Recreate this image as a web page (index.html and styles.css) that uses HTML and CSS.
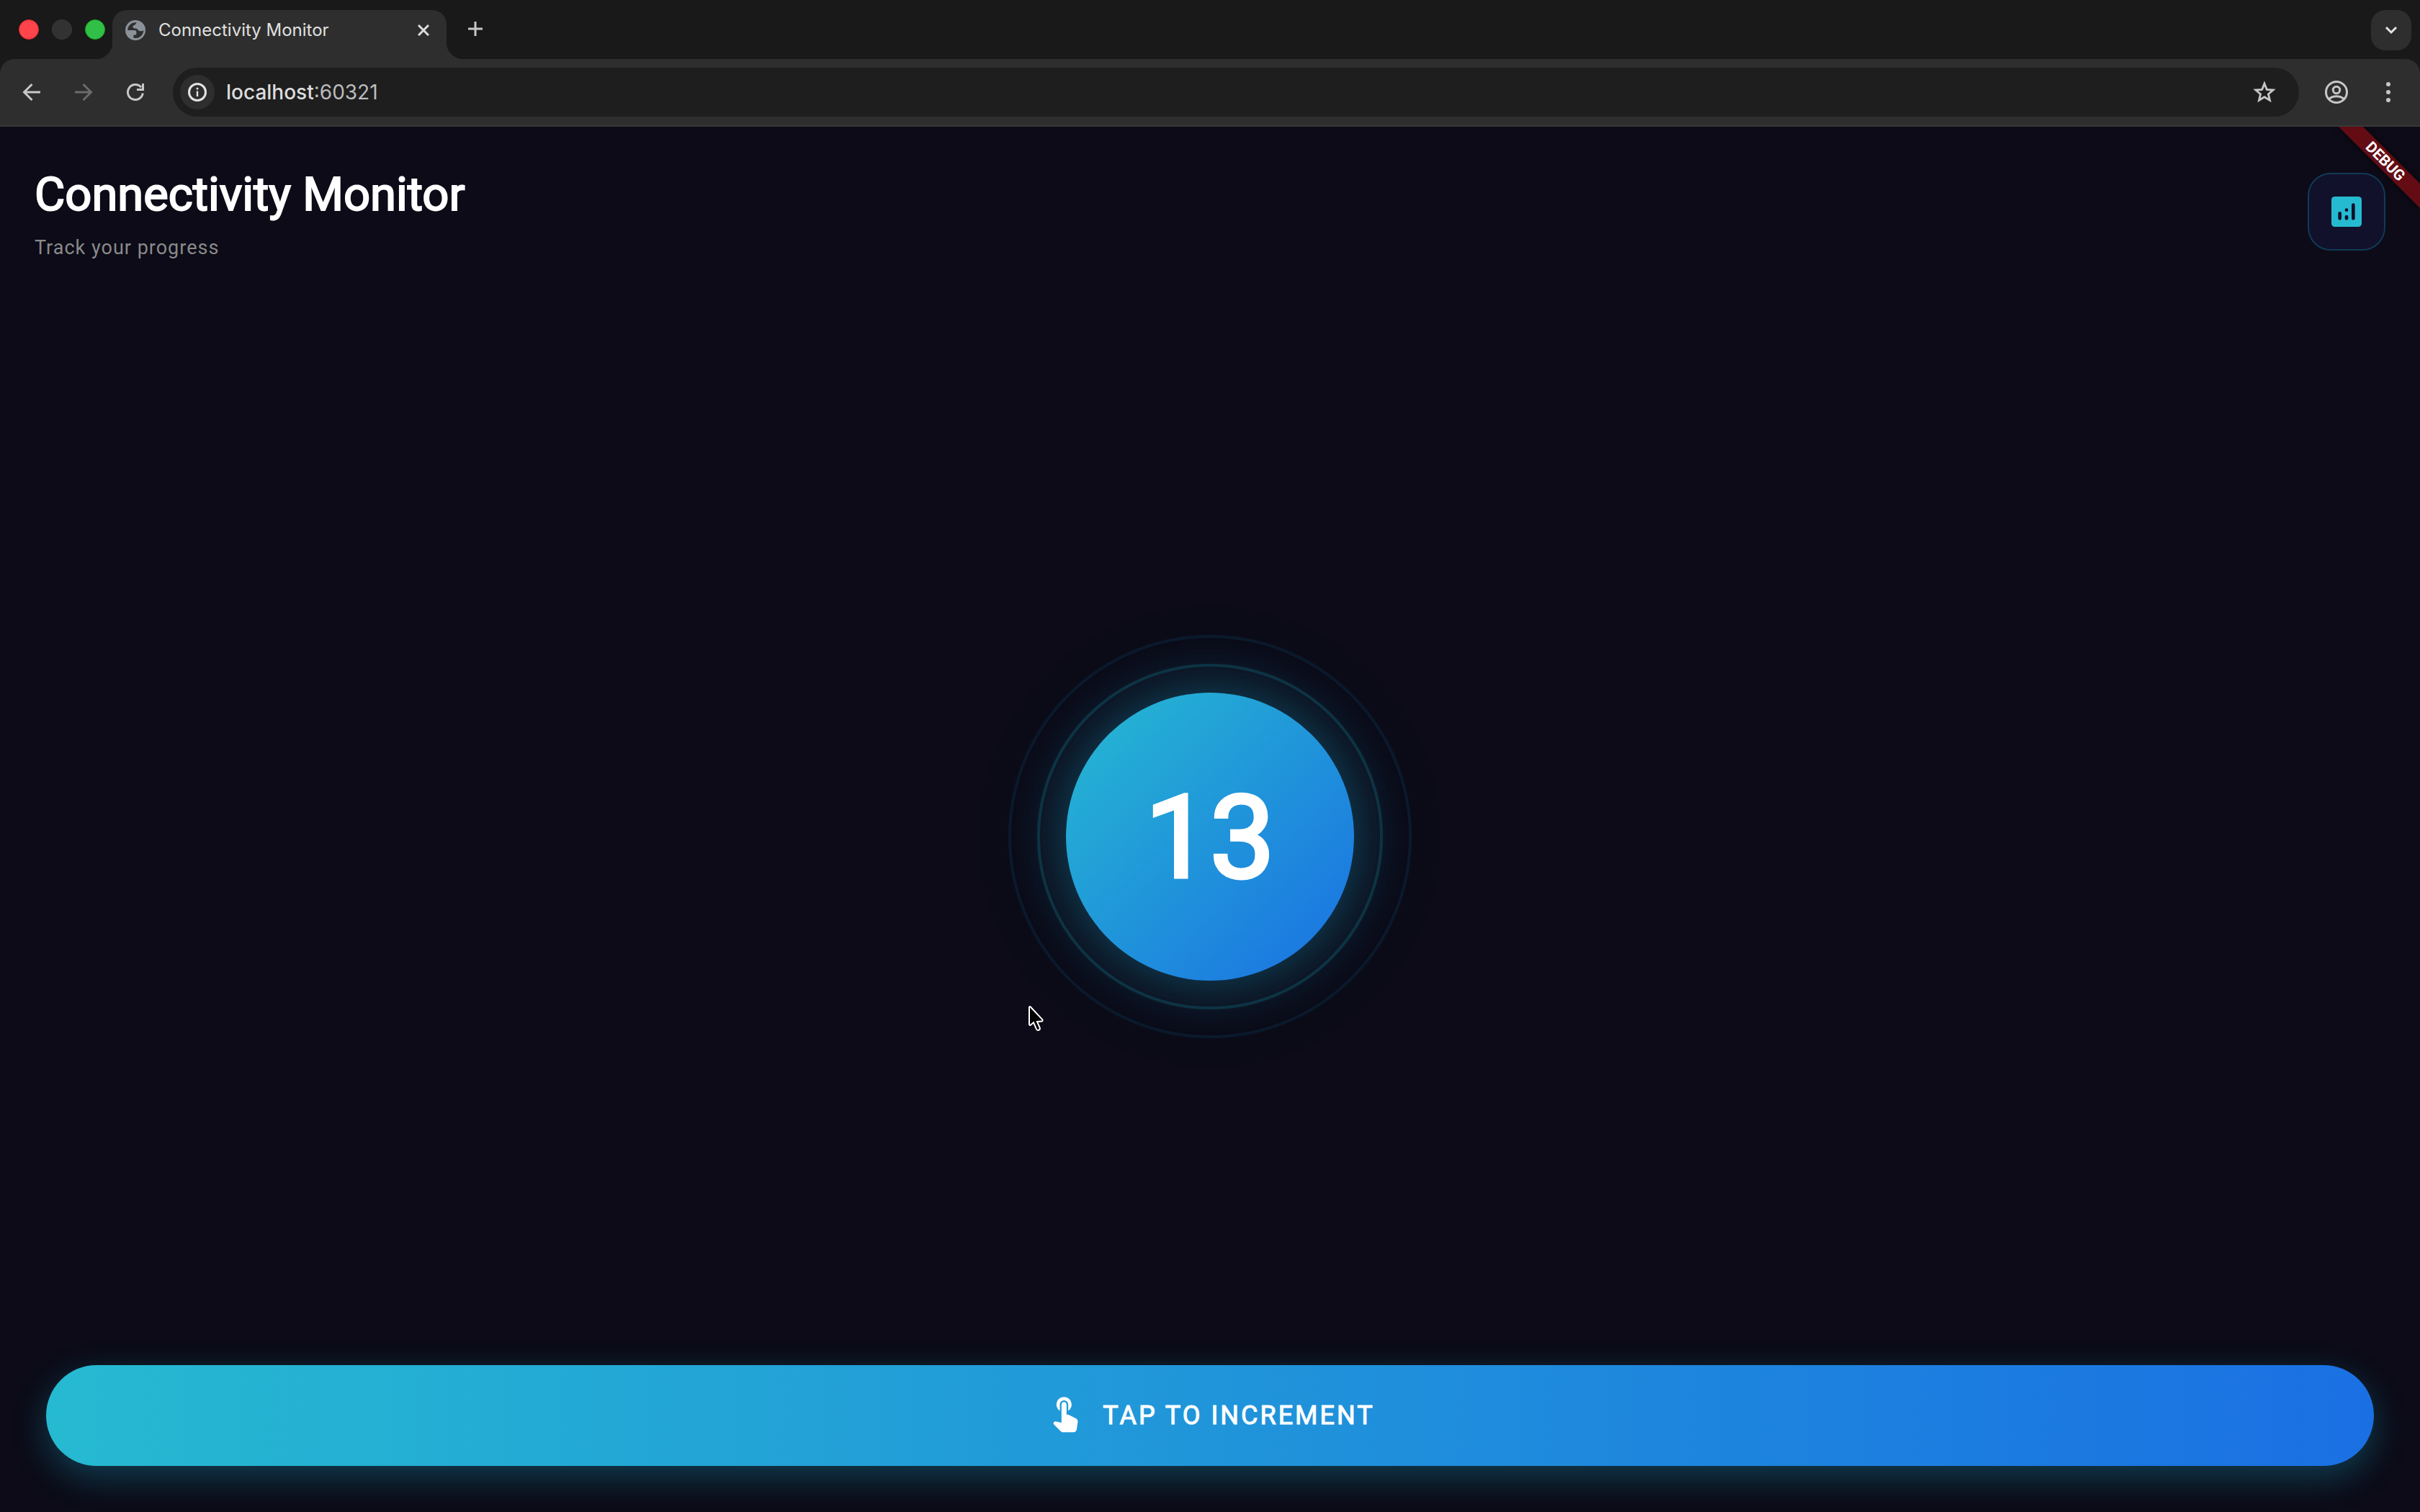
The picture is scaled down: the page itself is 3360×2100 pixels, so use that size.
FILE: index.html
```html
<!DOCTYPE html>
<html lang="en">
<head>
<meta charset="utf-8">
<title>Connectivity Monitor</title>
<link rel="stylesheet" href="styles.css">
</head>
<body>
<div class="browser">
  <div class="tab-strip">
    <div class="window-controls">
      <button class="light light-close" aria-label="Close window"></button>
      <button class="light light-minimize" aria-label="Minimize window"></button>
      <button class="light light-zoom" aria-label="Zoom window"></button>
    </div>
    <div class="tab">
      <svg class="tab-favicon" viewBox="0 0 28 28" aria-hidden="true">
        <circle cx="14" cy="14" r="14" fill="#8b9299"/>
        <path fill="#2e2e2e" d="M16.5 3.3c-2.200.3-1.400 2.300-3.400 3.300-1.200.6-2.600.7-2.600 2.500 0 1.800 1 2.300 2.600 2.300h1.500c1.600 0 2.300 1.500 3.600 2.900 1.200 1.200 3.200 1.100 5.200.6l1.900-.3c-.4 4.500-3.300 8.400-7.400 9.800-2 .6-4.600.7-6.600.1v-2.900c0-.9.5-1.200 1.300-1.200h1.500c1 0 1.300-.6 1.300-1.500v-2.200c0-2-1.300-2.700-3.300-2.700H3.300V14C3.300 8 8 3.200 14 3.200c.9 0 1.700 0 2.500.1z"/>
      </svg>
      <span class="tab-title">Connectivity Monitor</span>
      <button class="tab-close" aria-label="Close tab">
        <svg width="16" height="16" viewBox="0 0 16 16"><path d="M1 1l14 14M15 1L1 15" stroke="#dedede" stroke-width="3" fill="none"/></svg>
      </button>
    </div>
    <button class="new-tab" aria-label="New tab">
      <svg width="20" height="20" viewBox="0 0 20 20"><path d="M10 0v20M0 10h20" stroke="#c7c7c7" stroke-width="3" fill="none"/></svg>
    </button>
    <button class="tab-search" aria-label="Search tabs">
      <svg width="18" height="12" viewBox="0 0 18 12"><path d="M2 2l7 7 7-7" stroke="#e3e3e3" stroke-width="3" fill="none"/></svg>
    </button>
  </div>

  <div class="toolbar">
    <button class="nav-button" aria-label="Back">
      <svg width="26" height="26" viewBox="0 0 26 26"><path d="M25 13H3M13.500 2L2.500 13l11 11" stroke="#c7c7c7" stroke-width="3" fill="none"/></svg>
    </button>
    <button class="nav-button" aria-label="Forward" disabled>
      <svg width="26" height="26" viewBox="0 0 26 26"><path d="M1 13h22M12.500 2l11 11-11 11" stroke="#6b6b6b" stroke-width="3" fill="none"/></svg>
    </button>
    <button class="nav-button" aria-label="Reload">
      <svg width="26" height="26" viewBox="0 0 26 26"><path d="M23.300 14.500A10.500 10.500 0 1 1 21 6.300" stroke="#c7c7c7" stroke-width="3" fill="none"/><path d="M22 1h3v10H15V8h7z" fill="#c7c7c7"/></svg>
    </button>
    <div class="address-bar">
      <button class="site-info" aria-label="View site information">
        <svg width="28" height="28" viewBox="0 0 28 28"><circle cx="14" cy="14" r="11.500" stroke="#e3e3e3" stroke-width="3" fill="none"/><path d="M14 12.500V20" stroke="#e3e3e3" stroke-width="2.400"/><circle cx="14" cy="9" r="1.500" fill="#e3e3e3"/></svg>
      </button>
      <span class="address"><span class="address-host">localhost</span>:60321</span>
      <button class="bookmark" aria-label="Bookmark this tab">
        <svg width="32" height="32" viewBox="0 0 32 32"><path d="M16 4l3.300 8.300 8.900.7-6.800 5.700 2.100 8.500L16 22.700l-7.500 4.500 2.100-8.500L3.800 13l8.900-.7z" stroke="#c7c7c7" stroke-width="2.800" fill="none"/></svg>
      </button>
    </div>
    <button class="profile" aria-label="Profile">
      <svg width="32" height="32" viewBox="0 0 32 32" fill="none" stroke="#c7c7c7" stroke-width="3"><circle cx="16" cy="16" r="14.500"/><circle cx="16" cy="13" r="4.700"/><path d="M5.500 25.500c6-5 15-5 21 0"/></svg>
    </button>
    <button class="menu" aria-label="Browser menu">
      <svg width="6" height="28" viewBox="0 0 6 28" fill="#c7c7c7"><circle cx="3" cy="3" r="3"/><circle cx="3" cy="14" r="3"/><circle cx="3" cy="25" r="3"/></svg>
    </button>
  </div>

  <div class="page">
    <header class="page-header">
      <div class="heading">
        <h1 class="page-title">Connectivity Monitor</h1>
        <p class="page-subtitle">Track your progress</p>
      </div>
      <button class="stats-button" aria-label="Statistics">
        <svg width="56" height="56" viewBox="0 0 24 24">
          <rect x="3" y="3" width="18" height="18" rx="2" fill="#26bad1"/>
          <g fill="#12112b"><rect x="7" y="12" width="2" height="5" rx="1"/><rect x="11" y="10" width="2" height="2" rx="1"/><rect x="11" y="14" width="2" height="3" rx="1"/><rect x="15" y="7" width="2" height="10" rx="1"/></g>
        </svg>
      </button>
    </header>

    <main class="stage">
      <div class="ring ring-outer">
        <div class="ring ring-inner">
          <output class="counter">13</output>
        </div>
      </div>
      <svg class="pointer" width="24" height="38" viewBox="0 0 24 38" aria-hidden="true"><path d="M2 3.200v23.400c0 1.200 1.200 1.700 2.100.9l3.900-3.300 3.900 8.900c1.600 3.400 6 1.400 4.700-1.900l-3.700-8.300 6.300-.5c1.500-.1 1.900-1.500.9-2.500L3.600 2.300C2.900 1.600 2 2.100 2 3.200z" fill="#000" stroke="#fff" stroke-width="2"/></svg>
    </main>

    <footer class="actions">
      <button class="increment">
        <svg width="56" height="56" viewBox="0 0 24 24" fill="#fff" aria-hidden="true"><path d="M8.790 9.240V5.500c0-1.380 1.120-2.500 2.500-2.500s2.500 1.120 2.500 2.500v3.740c1.210-.81 2-2.180 2-3.740 0-2.490-2.010-4.500-4.500-4.500s-4.500 2.010-4.500 4.500c0 1.560.79 2.930 2 3.740zm5.500 2.470c-.28-.14-.58-.21-.89-.21h-.61v-6c0-.83-.67-1.500-1.500-1.500s-1.500.67-1.500 1.500v10.740l-3.440-.72c-.37-.08-.76.04-1.030.31-.43.44-.43 1.140 0 1.580l4.010 4.010c.38.370.89.580 1.420.580h6.100c1 0 1.840-.73 1.980-1.720l.63-4.460c.12-.85-.32-1.680-1.090-2.070l-4.080-2.040z"/></svg>
        <span>TAP TO INCREMENT</span>
      </button>
    </footer>

    <div class="debug-corner"><span class="debug-banner">DEBUG</span></div>
  </div>
</div>
</body>
</html>
```

FILE: styles.css
```css
* { box-sizing: border-box; }

body {
  margin: 0;
  background: #0c0b17;
  font-family: Roboto, "Liberation Sans", sans-serif;
}

h1, p { margin: 0; }

button {
  display: flex;
  align-items: center;
  justify-content: center;
  padding: 0;
  border: 0;
  background: none;
  color: inherit;
  font: inherit;
  cursor: pointer;
}

svg { display: block; flex: none; }

.browser {
  display: flex;
  flex-direction: column;
  min-height: 100vh;
}

/* Tab strip */
.tab-strip {
  display: flex;
  align-items: flex-start;
  height: 82px;
  padding: 14px 12px 0 26px;
  background: #191919;
  font-family: Inter, "Liberation Sans", sans-serif;
}

.window-controls {
  display: flex;
  gap: 18px;
  padding: 13px 10px 0 0;
}

.light {
  width: 28px;
  height: 28px;
  border-radius: 50%;
}
.light-close { background: #ff444b; border: 1px solid #e0242c; }
.light-minimize { background: #323232; border: 1px solid #3a3a3a; }
.light-zoom { background: #30c048; border: 1px solid #1da31c; }

.tab {
  position: relative;
  display: flex;
  align-items: center;
  width: 464px;
  height: 68px;
  padding: 0 16px 12px 18px;
  border-radius: 20px 20px 0 0;
  background: #2e2e2e;
}
.tab::before,
.tab::after {
  content: "";
  position: absolute;
  bottom: 0;
  width: 24px;
  height: 24px;
}
.tab::before {
  right: 100%;
  background: radial-gradient(circle at 0 0, transparent 24px, #2e2e2e 25px);
}
.tab::after {
  left: 100%;
  background: radial-gradient(circle at 100% 0, transparent 24px, #2e2e2e 25px);
}

.tab-favicon { width: 28px; height: 28px; }

.tab-title {
  flex: 1;
  margin-left: 18px;
  color: #e0e0e0;
  font-size: 24px;
  line-height: 28px;
}

.tab-close { width: 32px; height: 32px; }
.new-tab { width: 56px; height: 52px; margin-left: 12px; }

.tab-search {
  width: 56px;
  height: 56px;
  margin-left: auto;
  border-radius: 20px;
  background: #2e2e2e;
}

/* Toolbar */
.toolbar {
  display: flex;
  align-items: center;
  height: 94px;
  padding: 0 8px;
  border-bottom: 2px solid #383838;
  border-radius: 20px 20px 0 0;
  background: #2e2e2e;
  box-shadow: 0 -20px 0 #191919;
  clip-path: inset(0);
}

.nav-button { width: 72px; height: 68px; }

.address-bar {
  flex: 1;
  display: flex;
  align-items: center;
  height: 68px;
  margin: 0 16px;
  padding: 0 32px 0 10px;
  border-radius: 34px;
  background: #1e1e1e;
  font-family: Inter, "Liberation Sans", sans-serif;
}

.site-info {
  width: 48px;
  height: 48px;
  border-radius: 50%;
  background: #2e2e2e;
}

.address {
  flex: 1;
  margin-left: 16px;
  color: #bcbcbc;
  font-size: 28px;
  line-height: 36px;
}
.address-host {
  color: #dcdcdc;
  font-weight: 500;
}

.profile,
.menu {
  width: 72px;
  height: 68px;
}

/* App page */
.page {
  position: relative;
  flex: 1;
  display: flex;
  flex-direction: column;
}

.page-header {
  display: flex;
  align-items: center;
  justify-content: space-between;
  padding: 48px 48px 96px;
}

.heading {
  display: flex;
  flex-direction: column;
  gap: 8px;
}

.page-title {
  color: #fff;
  font-size: 65px;
  font-weight: 400;
  line-height: 92px;
  -webkit-text-stroke: 2px #fff;
}

.page-subtitle {
  color: #8a8a8a;
  font-size: 27px;
  line-height: 40px;
  letter-spacing: 1px;
}

.stats-button {
  width: 108px;
  height: 108px;
  border: 2px solid #103a57;
  border-radius: 32px;
  background: #12112b;
}

.stage {
  position: relative;
  flex: 1;
  display: flex;
  align-items: center;
  justify-content: center;
}

.ring {
  display: flex;
  align-items: center;
  justify-content: center;
  border-radius: 50%;
}
.ring-outer {
  width: 560px;
  height: 560px;
  border: 4px solid rgba(24, 160, 215, 0.1);
}
.ring-inner {
  width: 480px;
  height: 480px;
  border: 4px solid rgba(24, 186, 215, 0.18);
}

.counter {
  display: flex;
  align-items: center;
  justify-content: center;
  width: 400px;
  height: 400px;
  padding-top: 4px;
  border-radius: 50%;
  background: linear-gradient(135deg, #26bad1, #1a70e3);
  box-shadow: 0 0 68px 8px rgba(24, 180, 215, 0.28), 0 0 120px 24px rgba(26, 150, 220, 0.1);
  color: #fff;
  font-size: 160px;
  line-height: 188px;
  -webkit-text-stroke: 5px #fff;
}

.pointer {
  position: absolute;
  left: calc(50% - 253px);
  top: calc(50% + 234px);
}

.actions { padding: 32px 64px 64px; }

.increment {
  gap: 24px;
  width: 100%;
  height: 140px;
  border-radius: 70px;
  background: linear-gradient(92deg, #26bad1, #1a70e3);
  box-shadow: 0 16px 48px rgba(24, 180, 215, 0.3);
  color: #fff;
  font-size: 36px;
  line-height: 44px;
  letter-spacing: 3px;
  -webkit-text-stroke: 1px #fff;
}

.debug-corner {
  position: absolute;
  top: 0;
  right: 0;
  width: 128px;
  height: 128px;
  overflow: hidden;
  pointer-events: none;
}
.debug-banner {
  position: absolute;
  top: 36px;
  right: -32px;
  width: 160px;
  height: 24px;
  background: #630c14;
  box-shadow: 0 0 12px rgba(0, 0, 0, 0.5);
  color: #fff;
  font-size: 21px;
  font-weight: 700;
  line-height: 24px;
  text-align: center;
  transform: rotate(45deg);
}
```
